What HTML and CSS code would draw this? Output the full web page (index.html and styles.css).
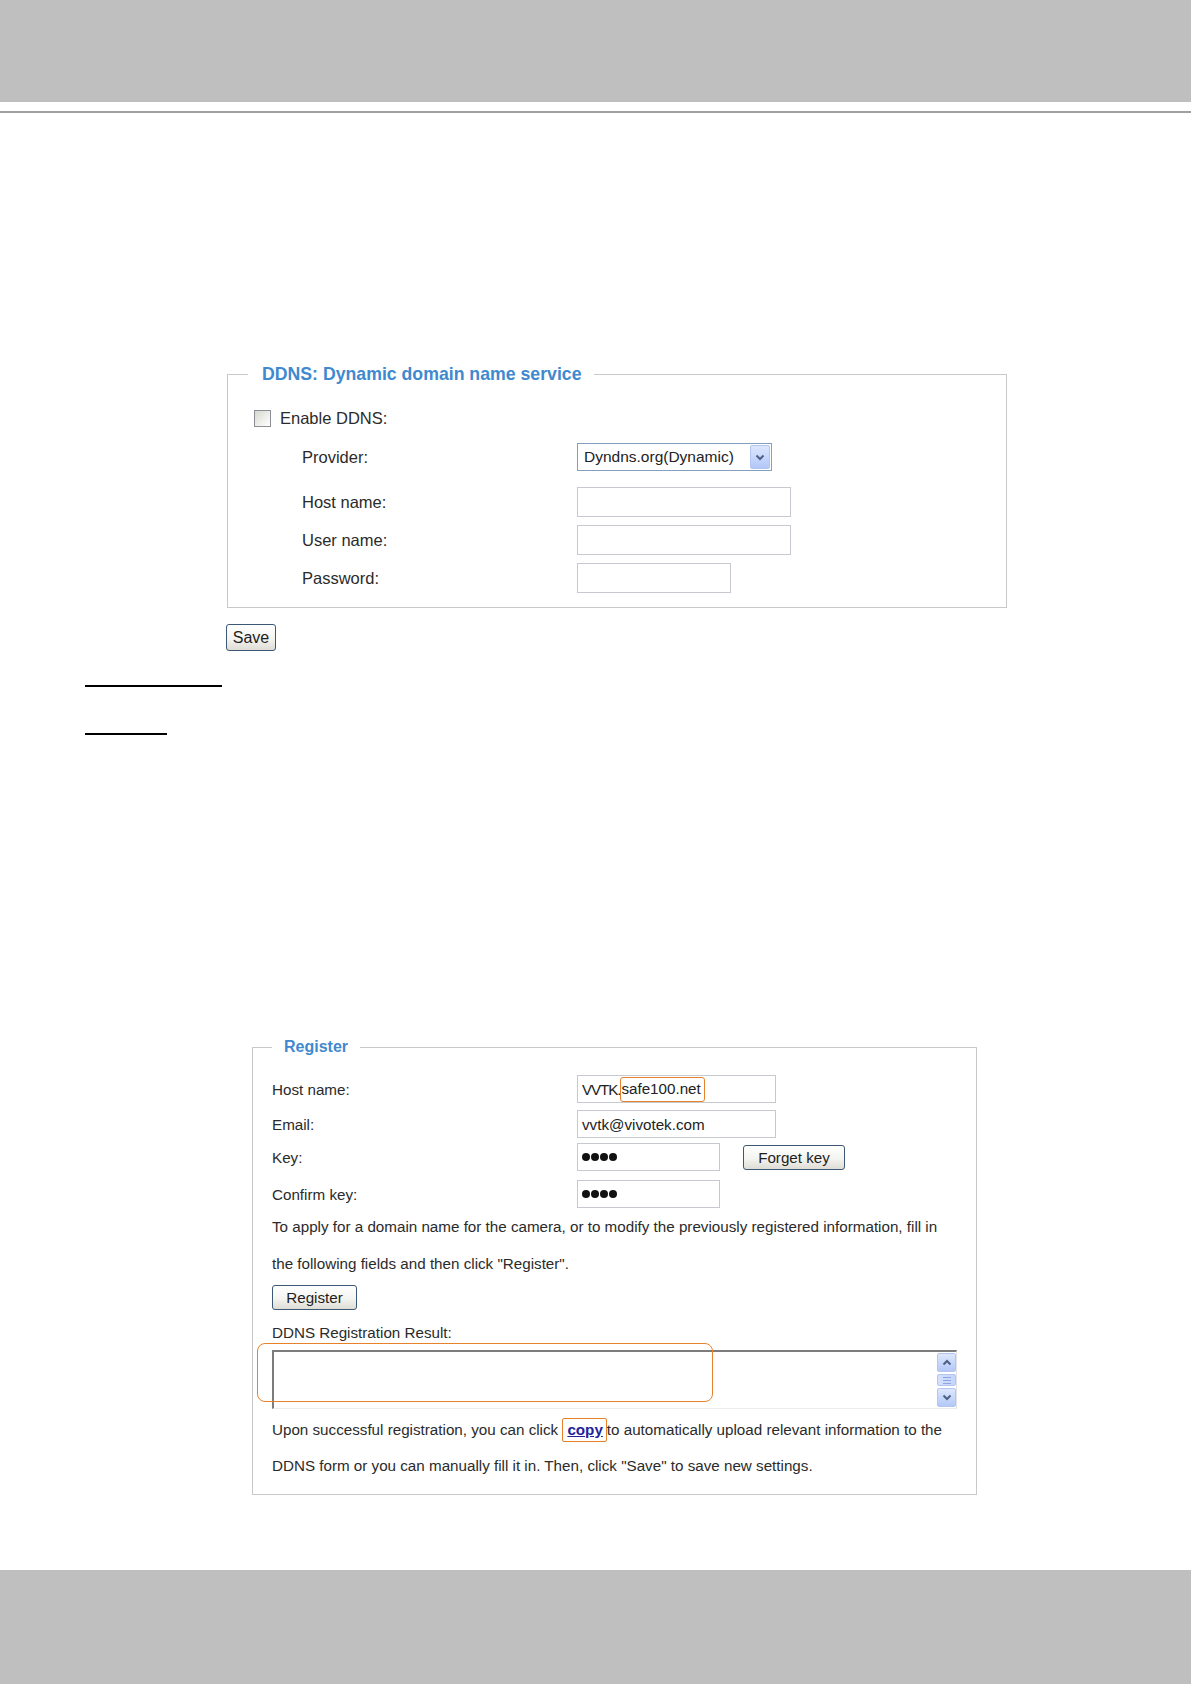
FILE: index.html
```html
<!DOCTYPE html>
<html lang="en">
<head>
<meta charset="utf-8">
<title>DDNS</title>
<link rel="stylesheet" href="styles.css">
</head>
<body>
<div class="band band-top"></div>
<div class="rule"></div>
<main class="page">
  <fieldset class="box box-ddns">
    <legend class="legend legend-ddns">DDNS: Dynamic domain name service</legend>
    <div class="ddns-body">
      <div class="row row-enable">
        <span class="checkbox"></span>
        <span class="label">Enable DDNS:</span>
      </div>
      <div class="row row-provider">
        <span class="label label-ind">Provider:</span>
        <div class="select">
          <span class="select-text">Dyndns.org(Dynamic)</span>
          <span class="select-btn">
            <svg width="10" height="7" viewBox="0 0 10 7"><polyline points="1.5,1.5 5,5 8.5,1.5" fill="none" stroke="#4d6185" stroke-width="2"/></svg>
          </span>
        </div>
      </div>
      <div class="row row-field">
        <span class="label label-ind">Host name:</span>
        <span class="input input-wide"></span>
      </div>
      <div class="row row-field row-gap">
        <span class="label label-ind">User name:</span>
        <span class="input input-wide"></span>
      </div>
      <div class="row row-field row-gap">
        <span class="label label-ind">Password:</span>
        <span class="input input-short"></span>
      </div>
    </div>
  </fieldset>

  <button class="btn btn-save" type="button">Save</button>

  <div class="blank-heading blank-1"></div>
  <div class="blank-heading blank-2"></div>

  <fieldset class="box box-reg">
    <legend class="legend legend-reg">Register</legend>
    <div class="reg-body">
      <div class="rrow">
        <span class="rlabel">Host name:</span>
        <span class="rinput rinput-wide"><span class="tight">VVTK.</span><span class="hl-text">safe100.net</span></span>
      </div>
      <div class="rrow rrow-email">
        <span class="rlabel">Email:</span>
        <span class="rinput rinput-wide">vvtk@vivotek.com</span>
      </div>
      <div class="rrow rrow-key">
        <span class="rlabel">Key:</span>
        <span class="rinput rinput-short"><span class="dots"><i class="dot"></i><i class="dot"></i><i class="dot"></i><i class="dot"></i></span></span>
        <button class="btn btn-forget" type="button">Forget key</button>
      </div>
      <div class="rrow rrow-confirm">
        <span class="rlabel">Confirm key:</span>
        <span class="rinput rinput-short"><span class="dots"><i class="dot"></i><i class="dot"></i><i class="dot"></i><i class="dot"></i></span></span>
      </div>
      <p class="para para-apply">To apply for a domain name for the camera, or to modify the previously registered information, fill in<br>the following fields and then click "Register".</p>
      <button class="btn btn-register" type="button">Register</button>
      <div class="result-label">DDNS Registration Result:</div>
      <div class="result-wrap">
        <div class="textarea">
          <div class="scrollbar">
            <span class="sb-btn"><svg width="10" height="7" viewBox="0 0 10 7"><polyline points="1.5,5.5 5,2 8.5,5.5" fill="none" stroke="#4d6185" stroke-width="2"/></svg></span>
            <span class="sb-thumb"><i></i><i></i><i></i></span>
            <span class="sb-btn"><svg width="10" height="7" viewBox="0 0 10 7"><polyline points="1.5,1.5 5,5 8.5,1.5" fill="none" stroke="#4d6185" stroke-width="2"/></svg></span>
          </div>
        </div>
        <div class="hl-area"></div>
      </div>
      <p class="para para-upon">Upon successful registration, you can click <span class="hl-box"><a class="copy-link" href="#">copy</a></span>to automatically upload relevant information to the<br>DDNS form or you can manually fill it in. Then, click "Save" to save new settings.</p>
    </div>
  </fieldset>
</main>
<div class="band band-bottom"></div>
</body>
</html>
```

FILE: styles.css
```css
* { box-sizing: border-box; }

html, body {
  margin: 0;
  padding: 0;
}

body {
  width: 1191px;
  background: #ffffff;
  font-family: "Liberation Sans", Arial, sans-serif;
  color: #2b2b2b;
}

.band { background: #bfbfbf; }
.band-top { height: 102px; }
.band-bottom { height: 114px; margin-top: 75px; }

.rule {
  height: 2px;
  margin-top: 9px;
  background: #a0a0a0;
}

.page { display: flow-root; }

/* fieldsets */
.box {
  margin: 0;
  padding: 0;
  border: 1px solid #c9c9c9;
  min-inline-size: 0;
}

.box-ddns {
  margin: 250px 0 0 227px;
  width: 780px;
}

.box-reg {
  margin: 302px 0 0 252px;
  width: 725px;
}

.legend {
  color: #4189cf;
  font-weight: bold;
}

.legend-ddns {
  font-size: 17.7px;
  line-height: 22px;
  margin-left: 20px;
  padding: 0 13px 0 14px;
}

.legend-reg {
  font-size: 16px;
  line-height: 20px;
  margin-left: 19px;
  padding: 0 12px 0 12px;
}

/* DDNS body */
.ddns-body {
  padding: 19px 0 14px 26px;
  font-size: 16.5px;
}

.row {
  display: flex;
  align-items: center;
}

.row-enable { height: 28px; }
.row-provider { height: 28px; margin-top: 11px; }
.row-field { height: 30px; margin-top: 16px; }
.row-gap { margin-top: 8px; }

.checkbox {
  width: 17px;
  height: 17px;
  margin-right: 9px;
  border: 1px solid #8c8f93;
  background: linear-gradient(135deg, #d6d6d1 0%, #eeeeea 55%, #ffffff 100%);
}

.label-ind {
  margin-left: 48px;
  width: 275px;
}

.select {
  display: flex;
  align-items: center;
  justify-content: space-between;
  width: 195px;
  height: 28px;
  padding: 0 1px 0 6px;
  border: 1px solid #869fbe;
  background: #ffffff;
  font-size: 15.5px;
  color: #222;
}

.select-btn {
  display: flex;
  align-items: center;
  justify-content: center;
  width: 20px;
  height: 24px;
  border: 1px solid #b3c6f2;
  border-radius: 2px;
  background: linear-gradient(to bottom, #dce6fd 0%, #c3d4fb 60%, #b2c6f6 100%);
}

.input {
  display: block;
  height: 30px;
  border: 1px solid #c6cad0;
  background: #ffffff;
}

.input-wide { width: 214px; }
.input-short { width: 154px; }

/* buttons */
.btn {
  display: block;
  padding: 0;
  border: 1px solid #3b5876;
  border-radius: 3px;
  background: linear-gradient(to bottom, #ffffff 0%, #f4f4f1 55%, #dedcd5 100%);
  font-family: "Liberation Sans", Arial, sans-serif;
  color: #1e1e1e;
  text-align: center;
}

.btn-save {
  margin: 16px 0 0 226px;
  width: 50px;
  height: 27px;
  font-size: 16px;
}

.btn-forget {
  margin-left: 23px;
  width: 102px;
  height: 25px;
  font-size: 15.2px;
}

.btn-register {
  margin-top: 3px;
  width: 85px;
  height: 25px;
  font-size: 15.2px;
}

/* invisible headings, only their underline is visible */
.blank-heading {
  margin-left: 85px;
  height: 2px;
  background: #000000;
}

.blank-1 { margin-top: 34px; width: 137px; }
.blank-2 { margin-top: 46px; width: 82px; }

/* register body */
.reg-body {
  padding: 18px 0 10px 19px;
  font-size: 15.2px;
}

.rrow {
  display: flex;
  align-items: center;
  height: 28px;
}

.rrow-email { margin-top: 7px; }
.rrow-key { margin-top: 5px; }
.rrow-confirm { margin-top: 9px; }

.rlabel { width: 305px; }

.rinput {
  display: flex;
  align-items: center;
  height: 28px;
  padding-left: 4px;
  border: 1px solid #c6cad0;
  background: #ffffff;
  color: #222;
  white-space: nowrap;
}

.rinput-wide { width: 199px; }
.rinput-short { width: 143px; }

.tight { letter-spacing: -1.1px; }

.hl-text {
  display: inline-block;
  height: 25px;
  line-height: 22px;
  padding-right: 3px;
  border: 1.5px solid #e8822a;
  border-radius: 3px;
}

.dots {
  display: flex;
  gap: 1px;
}

.dot {
  display: block;
  width: 8px;
  height: 8px;
  border-radius: 50%;
  background: #111111;
}

.para {
  margin: 0;
  white-space: nowrap;
}

.para-apply { line-height: 37px; }

.result-label {
  margin-top: 13px;
  line-height: 20px;
}

.result-wrap {
  position: relative;
  margin-top: 7px;
  width: 685px;
  height: 59px;
}

.textarea {
  display: flex;
  justify-content: flex-end;
  height: 100%;
  border-top: 2px solid #7c7c7c;
  border-left: 2px solid #7c7c7c;
  border-right: 1px solid #e2e2e2;
  border-bottom: 1px solid #ececec;
  background: #ffffff;
}

.scrollbar {
  display: flex;
  flex-direction: column;
  gap: 2px;
  width: 19px;
  padding: 1px 0 0 0;
}

.sb-btn {
  display: flex;
  align-items: center;
  justify-content: center;
  height: 19px;
  border: 1px solid #b3c6f2;
  border-radius: 2px;
  background: linear-gradient(to bottom, #dde7fd 0%, #c4d5fb 60%, #b4c8f6 100%);
}

.sb-thumb {
  display: flex;
  flex-direction: column;
  align-items: center;
  justify-content: center;
  gap: 2px;
  height: 12px;
  border: 1px solid #b3c6f2;
  border-radius: 2px;
  background: linear-gradient(to right, #d4e0fd 0%, #c4d5fb 100%);
}

.sb-thumb i {
  display: block;
  width: 8px;
  height: 1px;
  background: #8ea6e0;
}

.hl-area {
  position: absolute;
  left: -15px;
  top: -7px;
  width: 456px;
  height: 59px;
  border: 1.5px solid #e8822a;
  border-radius: 8px;
  pointer-events: none;
}

.para-upon {
  margin-top: 3px;
  line-height: 36px;
}

.hl-box {
  display: inline-block;
  line-height: 22px;
  padding: 0 3px 0 4px;
  border: 1.5px solid #e8822a;
  border-radius: 2px;
}

.copy-link {
  color: #22229a;
  font-weight: bold;
  text-decoration: underline;
}
```
